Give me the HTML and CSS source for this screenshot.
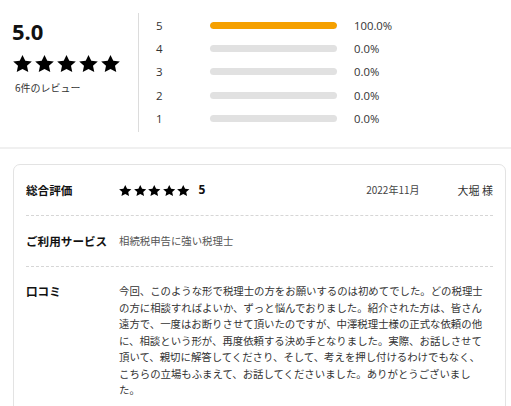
FILE: index.html
```html
<!DOCTYPE html>
<html lang="ja">
<head>
<meta charset="utf-8">
<link rel="stylesheet" href="styles.css">
</head>
<body>
<svg width="0" height="0" class="defs">
  <defs>
    <path id="star" d="M12 2l2.94 6.26 6.86.82-5.07 4.7 1.34 6.78L12 17.27 5.930 20.56l1.34-6.78L2.2 9.08l6.86-.82z"/>
  </defs>
</svg>
<section class="summary">
  <div class="score">
    <div class="score-num">5.0</div>
    <div class="stars-lg">
      <svg viewBox="2 2 20 18.6" preserveAspectRatio="none"><use href="#star"/></svg>
      <svg viewBox="2 2 20 18.6" preserveAspectRatio="none"><use href="#star"/></svg>
      <svg viewBox="2 2 20 18.6" preserveAspectRatio="none"><use href="#star"/></svg>
      <svg viewBox="2 2 20 18.6" preserveAspectRatio="none"><use href="#star"/></svg>
      <svg viewBox="2 2 20 18.6" preserveAspectRatio="none"><use href="#star"/></svg>
    </div>
    <div class="count">6件のレビュー</div>
  </div>
  <div class="dist">
    <div class="dist-row"><span class="dist-label">5</span><span class="bar"><span class="fill" style="width:100%"></span></span><span class="pct">100.0%</span></div>
    <div class="dist-row"><span class="dist-label">4</span><span class="bar"><span class="fill" style="width:0%"></span></span><span class="pct">0.0%</span></div>
    <div class="dist-row"><span class="dist-label">3</span><span class="bar"><span class="fill" style="width:0%"></span></span><span class="pct">0.0%</span></div>
    <div class="dist-row"><span class="dist-label">2</span><span class="bar"><span class="fill" style="width:0%"></span></span><span class="pct">0.0%</span></div>
    <div class="dist-row"><span class="dist-label">1</span><span class="bar"><span class="fill" style="width:0%"></span></span><span class="pct">0.0%</span></div>
  </div>
</section>

<article class="card">
  <div class="row row-rating">
    <div class="label">総合評価</div>
    <div class="stars-sm">
      <svg viewBox="2 2 20 18.6" preserveAspectRatio="none"><use href="#star"/></svg>
      <svg viewBox="2 2 20 18.6" preserveAspectRatio="none"><use href="#star"/></svg>
      <svg viewBox="2 2 20 18.6" preserveAspectRatio="none"><use href="#star"/></svg>
      <svg viewBox="2 2 20 18.6" preserveAspectRatio="none"><use href="#star"/></svg>
      <svg viewBox="2 2 20 18.6" preserveAspectRatio="none"><use href="#star"/></svg>
    </div>
    <div class="rating-num">5</div>
    <div class="date">2022年11月</div>
    <div class="name">大堀 様</div>
  </div>
  <div class="row">
    <div class="label">ご利用サービス</div>
    <div class="service">相続税申告に強い税理士</div>
  </div>
  <div class="row row-review">
    <div class="label">口コミ</div>
    <p class="review">今回、このような形で税理士の方をお願いするのは初めてでした。どの税理士の方に相談すればよいか、ずっと悩んでおりました。紹介された方は、皆さん遠方で、一度はお断りさせて頂いたのですが、中澤税理士様の正式な依頼の他に、相談という形が、再度依頼する決め手となりました。実際、お話しさせて頂いて、親切に解答してくださり、そして、考えを押し付けるわけでもなく、こちらの立場もふまえて、お話してくださいました。ありがとうございました。</p>
  </div>
</article>
</body>
</html>
```

FILE: styles.css
```css
* { box-sizing: border-box; }
html, body { margin: 0; padding: 0; background: #fff; }
body {
  font-family: "Open Sans", "Noto Sans CJK JP", sans-serif;
  color: #222;
  overflow: hidden;
}
.defs { position: absolute; width: 0; height: 0; }

.summary {
  display: flex;
  padding: 13px 0 15px 0;
  border-bottom: 2px solid #f0f0f0;
}
.score {
  width: 139px;
  padding-left: 12px;
  padding-top: 5px;
  border-right: 1px solid #dcdcdc;
  height: 119px;
}
.score-num {
  font-size: 22px;
  font-weight: 700;
  line-height: 26px;
  color: #111;
}
.stars-lg {
  display: flex;
  gap: 3px;
  margin-top: 11px;
  padding-left: 1px;
}
.stars-lg svg { width: 19px; height: 17px; fill: #000; display: block; }
.count {
  margin-top: 9px;
  padding-left: 3px;
  font-size: 10px;
  line-height: 14px;
  color: #333;
  font-family: "Noto Sans CJK JP", sans-serif;
}

.dist {
  padding-top: 1px;
  padding-left: 17px;
}
.dist-row {
  display: flex;
  align-items: center;
  height: 23.2px;
}
.dist-label {
  width: 54px;
  font-size: 11.5px;
  color: #333;
}
.bar {
  width: 127px;
  height: 7px;
  border-radius: 4px;
  background: #e1e1e1;
  overflow: hidden;
  display: block;
}
.fill {
  display: block;
  height: 100%;
  background: #f5a000;
  border-radius: 4px;
}
.pct {
  margin-left: 17px;
  font-size: 11.3px;
  color: #333;
}

.card {
  margin: 15px 5px 0 13px;
  border: 1px solid #e3e3e3;
  border-radius: 7px;
  padding: 0 12px;
}
.row {
  display: flex;
  align-items: center;
  padding: 17px 0;
  border-bottom: 1px dashed #d6d6d6;
  line-height: 16px;
}
.label {
  width: 93px;
  flex: none;
  font-family: "Noto Sans CJK JP", sans-serif;
  font-weight: 700;
  font-size: 11.6px;
  color: #111;
}
.stars-sm { display: flex; gap: 2px; }
.stars-sm svg { width: 12.5px; height: 11px; fill: #000; display: block; }
.rating-num {
  margin-left: 9px;
  font-weight: 700;
  font-size: 12px;
  color: #111;
}
.date {
  margin-left: auto;
  font-size: 10px;
  color: #444;
  font-family: "Noto Sans CJK JP", sans-serif;
}
.name {
  margin-left: 38px;
  font-size: 11px;
  color: #333;
  font-family: "Noto Sans CJK JP", sans-serif;
}
.service {
  font-family: "Noto Sans CJK JP", sans-serif;
  font-size: 10.4px;
  color: #555;
}
.row-review {
  align-items: flex-start;
  padding: 16px 0 20px;
  border-bottom: none;
  line-height: 16.5px;
}
.review {
  margin: 0;
  width: 367px;
  flex: none;
  font-family: "Noto Sans CJK JP", sans-serif;
  font-size: 10.4px;
  line-height: 16.5px;
  color: #333;
  text-spacing-trim: space-all;
}
```
